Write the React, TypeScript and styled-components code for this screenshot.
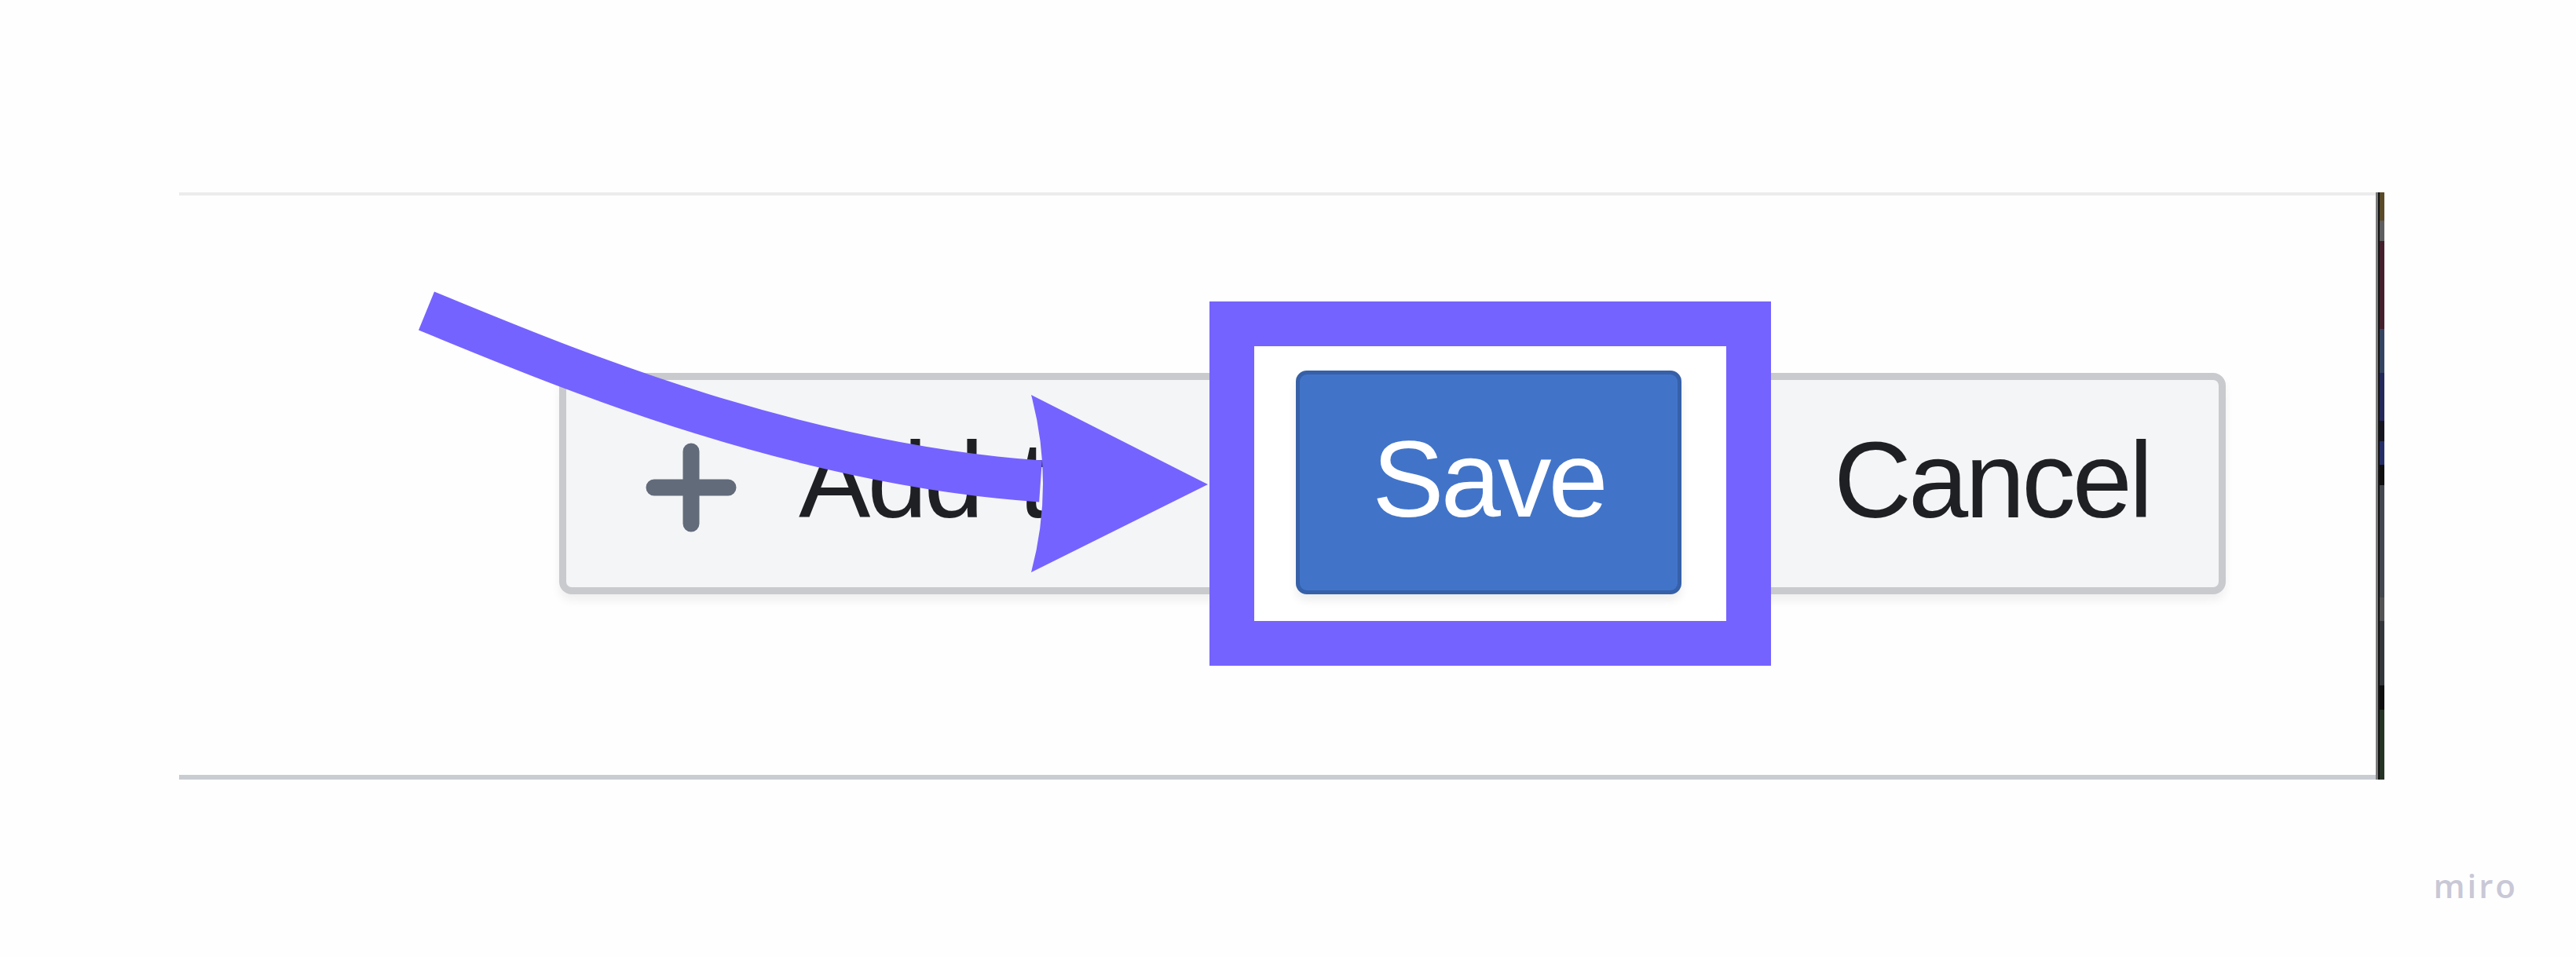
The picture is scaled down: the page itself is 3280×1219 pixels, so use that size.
import React from "react";
import styled, { createGlobalStyle } from "styled-components";

const Global = createGlobalStyle`
  html, body {
    margin: 0;
    padding: 0;
    background: #fefefe;
  }
  * { box-sizing: border-box; }
`;

const Board = styled.div`
  position: relative;
  width: 3280px;
  height: 1219px;
  overflow: hidden;
  background: #fefefe;
  padding: 245px 0 0 228px;
`;

const Shot = styled.div`
  display: flex;
  width: 2808px;
  height: 748px;
`;

const ShotBody = styled.div`
  flex: 1;
  background: #fefefe;
  border-top: 4px solid #ececee;
  border-bottom: 6px solid #c9ccd1;
  padding: 135px 0 0 484px;
`;

const EdgeStrip = styled.div`
  width: 11px;
  background:
    linear-gradient(to right, #7a7a7a 0 3px, #111111 3px 5px, transparent 5px),
    linear-gradient(
      to bottom,
      #5a4a28 0 36px,
      #5e5e60 36px 62px,
      #44202c 62px 174px,
      #34445f 174px 230px,
      #24295a 230px 291px,
      #161622 291px 317px,
      #252f66 317px 347px,
      #0f0f10 347px 373px,
      #43474e 373px 516px,
      #535355 516px 546px,
      #33363b 546px 628px,
      #0f0f10 628px 659px,
      #253325 659px 748px
    );
`;

const ButtonRow = styled.div`
  display: flex;
  align-items: center;
  height: 464px;
`;

const FONT = `"Liberation Sans", Arial, Helvetica, sans-serif`;

const GreyButton = styled.div<{ $w: number; $pl: number }>`
  position: relative;
  display: flex;
  align-items: center;
  width: ${(p) => p.$w}px;
  height: 282px;
  padding-left: ${(p) => p.$pl}px;
  padding-bottom: 10px;
  background: #f4f5f7;
  border: 9px solid #c9cacd;
  border-radius: 16px;
  box-shadow: 0 8px 12px rgba(0, 0, 0, 0.06);
  font-family: ${FONT};
  font-size: 137px;
  letter-spacing: -4px;
  word-spacing: 14px;
  color: #1e2023;
  white-space: nowrap;
  overflow: hidden;
`;

const PlusIcon = styled.svg`
  flex: none;
  width: 116px;
  height: 114px;
  margin-right: 79px;
  margin-top: 20px;
`;

const Spotlight = styled.div`
  position: relative;
  z-index: 1;
  flex: none;
  display: flex;
  align-items: center;
  justify-content: center;
  width: 715px;
  height: 464px;
  margin: 0 -25px 0 -60px;
  background: #ffffff;
  border: 57px solid #7563ff;
`;

const SaveButton = styled.div`
  display: flex;
  align-items: center;
  justify-content: center;
  width: 491px;
  height: 285px;
  margin: -4px 4px 0 0;
  padding-bottom: 8px;
  background: #4174c9;
  border: 5px solid #3660a8;
  border-radius: 14px;
  box-shadow: 0 8px 12px rgba(0, 0, 0, 0.07);
  font-family: ${FONT};
  font-size: 137px;
  letter-spacing: -4px;
  color: #ffffff;
`;

const ArrowLayer = styled.svg`
  position: absolute;
  top: 0;
  left: 0;
  z-index: 2;
  pointer-events: none;
`;

const Watermark = styled.div`
  position: absolute;
  right: 74px;
  top: 1107px;
  font-family: "Open Sans", "Noto Sans", sans-serif;
  font-weight: 600;
  font-size: 42px;
  line-height: 1;
  letter-spacing: 3px;
  color: #c9c8d6;
`;

export default function App() {
  return (
    <>
      <Global />
      <Board>
        <Shot>
          <ShotBody>
            <ButtonRow>
              <GreyButton $w={888} $pl={101}>
                <PlusIcon viewBox="0 0 116 114">
                  <path
                    d="M58 11 V103 M11 57 H105"
                    stroke="#626b7a"
                    strokeWidth="21"
                    strokeLinecap="round"
                    fill="none"
                  />
                </PlusIcon>
                Add to
              </GreyButton>
              <Spotlight>
                <SaveButton>Save</SaveButton>
              </Spotlight>
              <GreyButton $w={604} $pl={96}>
                Cancel
              </GreyButton>
            </ButtonRow>
          </ShotBody>
          <EdgeStrip />
        </Shot>
        <ArrowLayer width="3280" height="1219" viewBox="0 0 3280 1219">
          <path
            d="M543 396 C700 460, 1000 590, 1325 613"
            stroke="#7563ff"
            strokeWidth="53"
            fill="none"
          />
          <path d="M1313 503 L1538 617 L1313 729 Q1343 616 1313 503 Z" fill="#7563ff" />
        </ArrowLayer>
        <Watermark>miro</Watermark>
      </Board>
    </>
  );
}
